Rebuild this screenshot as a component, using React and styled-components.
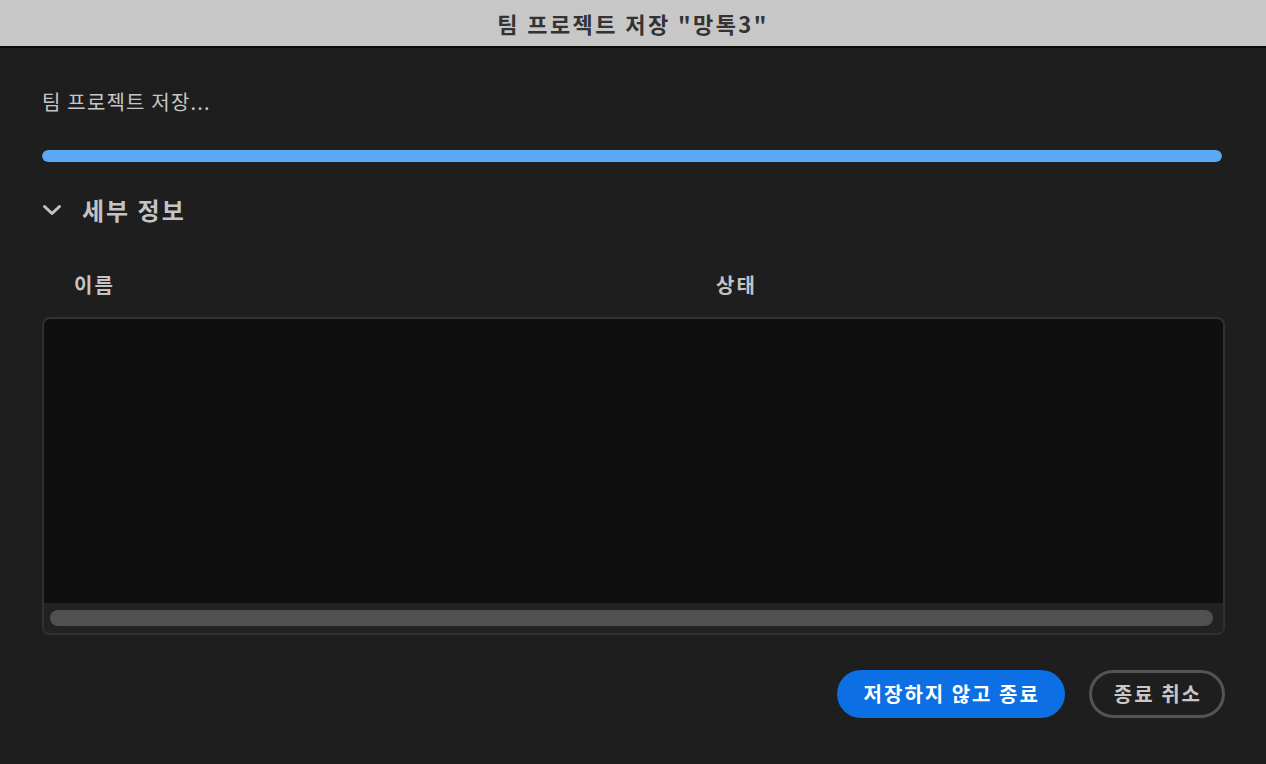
import styled, { createGlobalStyle } from "styled-components";

const GlobalStyle = createGlobalStyle`
  html, body {
    margin: 0;
    padding: 0;
    background: #1e1e1e;
  }
  body {
    font-family: "Noto Sans CJK KR", "Noto Sans", sans-serif;
  }
`;

const Window = styled.div`
  width: 1266px;
  height: 764px;
  display: flex;
  flex-direction: column;
  background: #1e1e1e;
  overflow: hidden;
`;

const TitleBar = styled.div`
  height: 46px;
  flex-shrink: 0;
  display: flex;
  align-items: center;
  justify-content: center;
  background: #c7c7c7;
  border-bottom: 2px solid #0c0c0c;
`;

const TitleText = styled.h1`
  margin: 0;
  font-size: 22px;
  font-weight: 700;
  color: #333333;
  line-height: 1;
  letter-spacing: 2.4px;
`;

const Body = styled.div`
  flex: 1;
  display: flex;
  flex-direction: column;
  padding: 42px 41px 0 42px;
`;

const StatusText = styled.div`
  font-size: 20px;
  line-height: 24px;
  letter-spacing: 1.2px;
  color: #c6c6c6;
`;

const ProgressTrack = styled.div`
  margin-top: 36px;
  height: 12px;
  width: 1180px;
  border-radius: 6px;
  background: #3a3a3a;
  overflow: hidden;
`;

const ProgressFill = styled.div`
  height: 100%;
  border-radius: 6px;
  background: #5aa8f6;
`;

const DetailsToggle = styled.button`
  margin-top: 33px;
  padding: 0;
  border: none;
  background: none;
  display: flex;
  align-items: center;
  gap: 20px;
  cursor: pointer;
  color: #c4c4c4;
  font-family: inherit;
  font-size: 24px;
  font-weight: 700;
  line-height: 30px;
  letter-spacing: 2px;
  align-self: flex-start;
`;

const HeaderRow = styled.div`
  margin-top: 48px;
  display: grid;
  grid-template-columns: 642px 1fr;
  padding-left: 32px;
  font-size: 20px;
  font-weight: 700;
  line-height: 24px;
  letter-spacing: 2px;
  color: #c4c4c4;
`;

const ListBox = styled.div`
  margin-top: 20px;
  height: 318px;
  box-sizing: border-box;
  border: 2px solid #313131;
  border-radius: 8px;
  background: #0f0f0f;
  display: flex;
  flex-direction: column;
  overflow: hidden;
`;

const ListArea = styled.div`
  flex: 1;
`;

const ScrollTrack = styled.div`
  height: 30px;
  flex-shrink: 0;
  background: #222222;
  display: flex;
  align-items: center;
  padding: 0 10px 0 6px;
`;

const ScrollThumb = styled.div`
  flex: 1;
  height: 16px;
  border-radius: 8px;
  background: #505050;
`;

const Footer = styled.div`
  margin-top: 35px;
  display: flex;
  justify-content: flex-end;
  gap: 24px;
`;

const Button = styled.button`
  height: 48px;
  box-sizing: border-box;
  border-radius: 24px;
  font-family: inherit;
  font-size: 20px;
  font-weight: 700;
  line-height: 1;
  letter-spacing: 2px;
  cursor: pointer;
  padding: ${(p) => (p.$primary ? "0 25px 0 27px" : "0 20px 0 22px")};
  background: ${(p) => (p.$primary ? "#0d6fe4" : "transparent")};
  color: ${(p) => (p.$primary ? "#ffffff" : "#c8c8c8")};
  border: ${(p) => (p.$primary ? "none" : "3px solid #545454")};
`;

const Chevron = () => (
  <svg width="20" height="14" viewBox="0 0 20 14" fill="none">
    <path
      d="M2.5 3.5 L10 10.5 L17.5 3.5"
      stroke="#c4c4c4"
      strokeWidth="3"
      strokeLinecap="round"
      strokeLinejoin="round"
    />
  </svg>
);

export default function App() {
  const progress = 100;
  return (
    <Window>
      <GlobalStyle />
      <TitleBar>
        <TitleText>팀 프로젝트 저장 "망톡3"</TitleText>
      </TitleBar>
      <Body>
        <StatusText>팀 프로젝트 저장...</StatusText>
        <ProgressTrack>
          <ProgressFill style={{ width: `${progress}%` }} />
        </ProgressTrack>
        <DetailsToggle>
          <Chevron />
          세부 정보
        </DetailsToggle>
        <HeaderRow>
          <span>이름</span>
          <span>상태</span>
        </HeaderRow>
        <ListBox>
          <ListArea />
          <ScrollTrack>
            <ScrollThumb />
          </ScrollTrack>
        </ListBox>
        <Footer>
          <Button $primary>저장하지 않고 종료</Button>
          <Button>종료 취소</Button>
        </Footer>
      </Body>
    </Window>
  );
}
